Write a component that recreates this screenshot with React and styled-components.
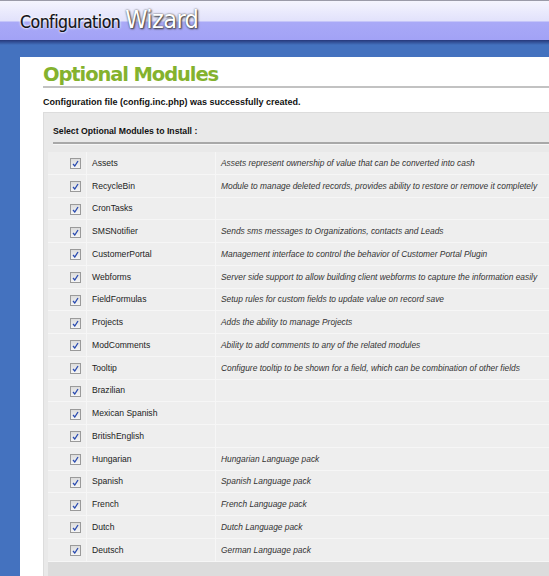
import React from "react"
import styled, { createGlobalStyle } from "styled-components"

const modules = [
  ["Assets", "Assets represent ownership of value that can be converted into cash"],
  ["RecycleBin", "Module to manage deleted records, provides ability to restore or remove it completely"],
  ["CronTasks", ""],
  ["SMSNotifier", "Sends sms messages to Organizations, contacts and Leads"],
  ["CustomerPortal", "Management interface to control the behavior of Customer Portal Plugin"],
  ["Webforms", "Server side support to allow building client webforms to capture the information easily"],
  ["FieldFormulas", "Setup rules for custom fields to update value on record save"],
  ["Projects", "Adds the ability to manage Projects"],
  ["ModComments", "Ability to add comments to any of the related modules"],
  ["Tooltip", "Configure tooltip to be shown for a field, which can be combination of other fields"],
  ["Brazilian", ""],
  ["Mexican Spanish", ""],
  ["BritishEnglish", ""],
  ["Hungarian", "Hungarian Language pack"],
  ["Spanish", "Spanish Language pack"],
  ["French", "French Language pack"],
  ["Dutch", "Dutch Language pack"],
  ["Deutsch", "German Language pack"],
]

const GlobalStyle = createGlobalStyle`
  html, body {
    margin: 0;
    padding: 0;
    overflow: hidden;
    background: #4472bf;
  }
  body {
    font-family: "Liberation Sans", Arial, sans-serif;
  }
`

const Page = styled.div`
  width: 549px;
  height: 576px;
  overflow: hidden;
  background: #4472bf;
`

const Header = styled.div`
  height: 40px;
  border-top: 1px solid #9a9aa8;
  background: linear-gradient(
    to bottom,
    #f4f4fe 0%,
    #e2e2fb 50%,
    #a9a9f7 55%,
    #a2a2f6 100%
  );
  display: flex;
  align-items: center;
  padding-left: 20px;
  box-sizing: border-box;
`

const HeaderEdge = styled.div`
  height: 5px;
  background: linear-gradient(to bottom, #26387a, #4472bf);
`

const Brand = styled.div`
  display: flex;
  align-items: baseline;
  gap: 5px;
  margin-top: -2px;
`

const BrandDark = styled.span`
  font-family: "DejaVu Sans Condensed", "DejaVu Sans", sans-serif;
  font-size: 17.5px;
  letter-spacing: -0.5px;
  color: #111118;
  -webkit-text-stroke: 0.2px #111118;
  text-shadow: 0 0 2px #fff, 0 0 3px #fff, 0 0 1px #fff;
`

const BrandLight = styled.span`
  font-family: "DejaVu Sans Condensed", "DejaVu Sans", sans-serif;
  font-size: 25px;
  letter-spacing: -0.6px;
  color: #fff;
  text-shadow: 1px 1px 2px #333, 0 0 2px #555;
`

const Body = styled.div`
  margin: 12px 0 0 20px;
  width: 640px;
  height: 600px;
  background: #fff;
  padding: 6px 0 0 23px;
  box-sizing: border-box;
`

const Title = styled.h1`
  margin: 0;
  font-family: "DejaVu Sans", Verdana, sans-serif;
  font-weight: bold;
  font-size: 19.5px;
  letter-spacing: -1.1px;
  color: #84b22e;
  line-height: 22px;
  padding-top: 1px;
  border-bottom: 2px solid #c2c2c2;
`

const Notice = styled.p`
  margin: 0;
  padding: 9px 0 0;
  height: 24px;
  box-sizing: border-box;
  font-size: 9px;
  font-weight: bold;
  color: #111;
`

const Panel = styled.div`
  background: #e9e9e9;
  border: 1px solid #dcdcdc;
  border-right: none;
  padding: 0 0 0 4px;
`

const PanelHead = styled.div`
  margin: 0 0 0 5px;
  height: 31px;
  box-sizing: border-box;
  padding-top: 13px;
  font-size: 8.7px;
  font-weight: bold;
  color: #111;
  border-bottom: 2px solid #a8a8a8;
  box-shadow: 0 1px 0 #f6f6f6;
`

const Table = styled.div`
  margin-top: 8px;
  background: #eeeeee;
`

const Row = styled.div`
  display: grid;
  grid-template-columns: 38px 129px 1fr;
  height: 22.75px;
  border-bottom: 1px solid #f6f6f6;
  box-sizing: border-box;
`

const Cell = styled.div`
  display: flex;
  align-items: center;
  font-size: ${(p) => (p.$desc ? "8.4px" : "8.6px")};
  padding-left: ${(p) => (p.$check ? "22px" : "5px")};
  border-left: ${(p) => (p.$check ? "none" : "1px solid #f6f6f6")};
  font-style: ${(p) => (p.$desc ? "italic" : "normal")};
  color: ${(p) => (p.$desc ? "#333" : "#1c1c1c")};
  white-space: nowrap;
`

const Box = styled.span`
  width: 11px;
  height: 11px;
  box-sizing: border-box;
  border: 1px solid #9a9a9a;
  background: linear-gradient(to bottom, #dcdcdc, #f6f6f6);
  display: flex;
  align-items: center;
  justify-content: center;
  margin-top: 2px;
`

const Footer = styled.div`
  height: 40px;
  background: #dcdcdc;
`

const Check = () => (
  <Box>
    <svg width="7" height="7" viewBox="0 0 7 7">
      <path d="M1 4 L2.8 6 L6 1" fill="none" stroke="#2a4bb0" strokeWidth="1.3" />
    </svg>
  </Box>
)

export default function App() {
  return (
    <Page>
      <GlobalStyle />
      <Header>
        <Brand>
          <BrandDark>Configuration</BrandDark>
          <BrandLight>Wizard</BrandLight>
        </Brand>
      </Header>
      <HeaderEdge />
      <Body>
        <Title>Optional Modules</Title>
        <Notice>Configuration file (config.inc.php) was successfully created.</Notice>
        <Panel>
          <PanelHead>Select Optional Modules to Install :</PanelHead>
          <Table>
            {modules.map(([name, desc]) => (
              <Row key={name}>
                <Cell $check>
                  <Check />
                </Cell>
                <Cell>{name}</Cell>
                <Cell $desc>{desc}</Cell>
              </Row>
            ))}
          </Table>
          <Footer />
        </Panel>
      </Body>
    </Page>
  )
}
